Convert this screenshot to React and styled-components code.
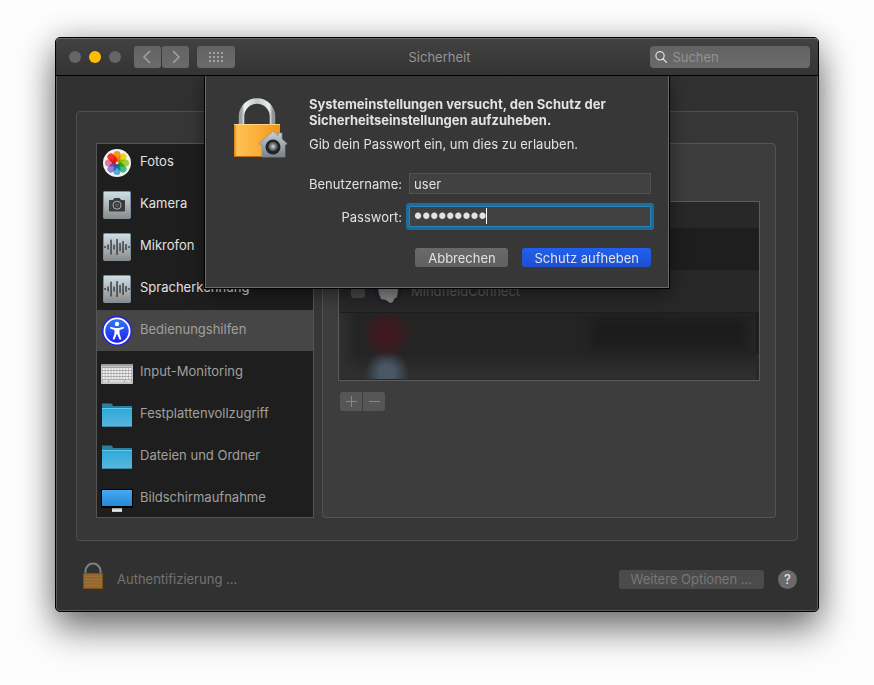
import { useState } from "react";
import styled, { createGlobalStyle } from "styled-components";

const GlobalStyle = createGlobalStyle`
  * {
    box-sizing: border-box;
  }

  body {
    margin: 0;
    background: #fdfdfd;
    color: #e2e2e2;
    font-family: Inter, "Liberation Sans", sans-serif;
    font-size: 13px;
    line-height: 16px;
  }

  button, input {
    font: inherit;
    color: inherit;
    margin: 0;
    padding: 0;
    border: none;
    outline: none;
  }
`;

const categories = [
  { name: "Fotos", icon: "photos" },
  { name: "Kamera", icon: "camera" },
  { name: "Mikrofon", icon: "wave" },
  { name: "Spracherkennung", icon: "wave" },
  { name: "Bedienungshilfen", icon: "access", dimmed: true },
  { name: "Input-Monitoring", icon: "keyboard", dimmed: true },
  { name: "Festplattenvollzugriff", icon: "folder", dimmed: true },
  { name: "Dateien und Ordner", icon: "folder", dimmed: true },
  { name: "Bildschirmaufnahme", icon: "display", dimmed: true },
];

const App = () => {
  const [selected, setSelected] = useState("Bedienungshilfen");

  return (
    <>
      <GlobalStyle />
      <Desktop>
        <Window>
          <Toolbar>
            <ToolbarLeft>
              <Lights>
                <Light aria-label="Schließen" />
                <Light aria-label="Minimieren" color="#ffbd04" />
                <Light aria-label="Zoomen" />
              </Lights>
              <NavButtons>
                <ToolButton aria-label="Zurück">
                  <ChevronIcon d="M9 1 3 7l6 6" />
                </ToolButton>
                <ToolButton aria-label="Vorwärts">
                  <ChevronIcon d="M4 1l6 6-6 6" />
                </ToolButton>
              </NavButtons>
              <ToolButton $wide aria-label="Alle einblenden">
                <GridIcon />
              </ToolButton>
            </ToolbarLeft>
            <WindowTitle>Sicherheit</WindowTitle>
            <SearchBox>
              <SearchIcon />
              <input type="search" placeholder="Suchen" aria-label="Suchen" />
            </SearchBox>
          </Toolbar>

          <Content>
            <Group>
              <SideList>
                {categories.map((item) => (
                  <li key={item.name}>
                    <SideItem
                      $selected={item.name === selected}
                      $dimmed={item.dimmed}
                      onClick={() => setSelected(item.name)}
                    >
                      <CategoryIcon name={item.icon} />
                      <span>{item.name}</span>
                    </SideItem>
                  </li>
                ))}
              </SideList>
              <Panel>
                <AppList>
                  <AppRow $short />
                  <AppRow $dark />
                  <AppRow>
                    <AppCheck type="checkbox" id="mindfield" disabled />
                    <MindfieldIcon />
                    <label htmlFor="mindfield">MindfieldConnect</label>
                  </AppRow>
                  <AppRow $dark />
                  <AppRow $short />
                  <Redacted />
                </AppList>
                <AddRemove>
                  <SmallButton aria-label="Hinzufügen">
                    <SignIcon d="M0 5.5h11M5.5 0v11" />
                  </SmallButton>
                  <SmallButton aria-label="Entfernen">
                    <SignIcon d="M0 5.5h11" />
                  </SmallButton>
                </AddRemove>
              </Panel>
            </Group>
            <Sheet />
          </Content>

          <Footer>
            <SmallLockIcon />
            <FooterText>Authentifizierung ...</FooterText>
            <MoreButton disabled>Weitere Optionen ...</MoreButton>
            <HelpButton aria-label="Hilfe">?</HelpButton>
          </Footer>
        </Window>
      </Desktop>
    </>
  );
};

const Sheet = () => {
  const [user, setUser] = useState("user");
  const [password, setPassword] = useState("password1");

  return (
    <SheetStyle onSubmit={(e) => e.preventDefault()}>
      <LockIcon />
      <SheetBody>
        <h1>
          Systemeinstellungen versucht, den Schutz der
          <br />
          Sicherheitseinstellungen aufzuheben.
        </h1>
        <p>Gib dein Passwort ein, um dies zu erlauben.</p>
        <Fields>
          <label htmlFor="user">Benutzername:</label>
          <Field>
            <input id="user" value={user} onChange={(e) => setUser(e.target.value)} />
          </Field>
          <label htmlFor="password">Passwort:</label>
          <Field $active>
            <input
              id="password"
              type="password"
              value={password}
              onChange={(e) => setPassword(e.target.value)}
            />
            <Caret />
          </Field>
        </Fields>
        <SheetButtons>
          <PushButton type="button">Abbrechen</PushButton>
          <PushButton $primary>Schutz aufheben</PushButton>
        </SheetButtons>
      </SheetBody>
    </SheetStyle>
  );
};

/* icons */

const ChevronIcon = ({ d }) => (
  <svg width="13" height="14" viewBox="0 0 13 14" fill="none" stroke="#a2a2a2" strokeWidth="1.5">
    <path d={d} />
  </svg>
);

const GridIcon = () => (
  <svg width="14" height="10" viewBox="0 0 14 10" fill="#a2a2a2">
    {[0, 4, 8].map((y) =>
      [0, 4, 8, 12].map((x) => <rect key={`${x}-${y}`} x={x} y={y} width="2" height="2" />)
    )}
  </svg>
);

const SearchIcon = () => (
  <svg width="14" height="14" viewBox="0 0 14 14" fill="none" stroke="#dedede" strokeWidth="1.4">
    <circle cx="5.7" cy="5.7" r="4.7" />
    <path d="M9 9l4 4" strokeLinecap="round" />
  </svg>
);

const SignIcon = ({ d }) => (
  <svg width="11" height="11" viewBox="0 0 11 11" stroke="#888888">
    <path d={d} />
  </svg>
);

const petals = ["#ffa21f", "#f7e01a", "#a8dc3c", "#48c78c", "#5ab4f0", "#9a8be0", "#f07cb4", "#ff3a2a"];
const bars = [2, 5, 15, 5, 16, 8, 12, 6, 2];

const CategoryIcon = ({ name }) => (
  <svg width="32" height="32" viewBox="0 0 32 32" aria-hidden="true">
    <defs>
      <linearGradient id="steel" x2="0" y2="1">
        <stop stopColor="#cfe0e8" />
        <stop offset="1" stopColor="#8b8b89" />
      </linearGradient>
      <linearGradient id="access" x2="0" y2="1">
        <stop stopColor="#2f7cf2" />
        <stop offset="1" stopColor="#1c1cf0" />
      </linearGradient>
      <linearGradient id="folder" x2="0" y2="1">
        <stop stopColor="#2aa9dc" />
        <stop offset="1" stopColor="#5cb6dc" />
      </linearGradient>
      <linearGradient id="display" x2="0" y2="1">
        <stop stopColor="#47aaf3" />
        <stop offset="1" stopColor="#2487d8" />
      </linearGradient>
    </defs>
    {name === "photos" && (
      <g style={{ isolation: "isolate" }}>
        <circle cx="16" cy="16" r="14" fill="#f1f1ef" />
        {petals.map((color, i) => (
          <rect
            key={color}
            x="12.500"
            y="4"
            width="7"
            height="11"
            rx="3.500"
            fill={color}
            style={{ mixBlendMode: "multiply" }}
            transform={`rotate(${i * 45} 16 16)`}
          />
        ))}
      </g>
    )}
    {(name === "camera" || name === "wave") && (
      <rect x="2.500" y="2.500" width="27" height="27" rx="1" fill="url(#steel)" stroke="#7d8f9b" />
    )}
    {name === "camera" && (
      <>
        <path d="M8.500 11.500h3.500l1.500-2h5l1.500 2h3.500v10.500h-15z" fill="#3a3b3c" stroke="#3a3b3c" strokeLinejoin="round" />
        <circle cx="16" cy="16.200" r="4" fill="#333" stroke="#a9b0b3" />
        <circle cx="16" cy="16.200" r="2.200" fill="#505355" />
      </>
    )}
    {name === "wave" &&
      bars.map((h, i) => (
        <rect key={i} x={3.300 + i * 3} y={16 - h / 2} width="1.500" height={h} rx="0.500" fill="#3c4043" />
      ))}
    {name === "access" && (
      <>
        <circle cx="16" cy="16" r="15" fill="#2222e6" />
        <circle cx="16" cy="16" r="12.600" fill="url(#access)" stroke="#fff" strokeWidth="1.800" />
        <circle cx="16" cy="9" r="2.200" fill="#fff" />
        <path
          d="M9.200 11.800l5 1.200h3.600l5-1.200v1.800l-4.300 1.400v3.500l1.900 6h-1.900l-2.300-5.500h-.4l-2.300 5.500h-1.900l1.900-6v-3.500l-4.300-1.400z"
          fill="#fff"
        />
      </>
    )}
    {name === "keyboard" && (
      <>
        <rect y="7" width="32" height="20" rx="1" fill="#c6c6c6" />
        <rect y="7" width="32" height="2" fill="#9f9b9b" />
        <rect x="1" y="10" width="30" height="15" fill="#a1a1a1" />
        {[0, 1, 2, 3].map((row) =>
          [0, 1, 2, 3, 4, 5, 6, 7, 8, 9].map((col) => (
            <rect key={`${row}-${col}`} x={1.500 + col * 2.950} y={11 + row * 3} width="2.300" height="2.200" fill="#f0f0f0" />
          ))
        )}
        <path d="M2 24h5M8 24h15M24 24h6" stroke="#f0f0f0" strokeWidth="1.600" />
      </>
    )}
    {name === "folder" && (
      <>
        <path d="M1 4.500h9q1.500 0 2 2.500h19v4H1z" fill="#2d7f9f" />
        <rect x="1" y="9" width="30" height="19" fill="url(#folder)" />
        <path d="M1 9.500h30" stroke="#63c8ea" />
        <path d="M1 27.500h30" stroke="#3d86a4" />
      </>
    )}
    {name === "display" && (
      <>
        <rect x="0" y="6" width="32" height="19" rx="1" fill="#000" />
        <rect x="1" y="7" width="30" height="16" fill="url(#display)" />
        <path d="M11 25h10v4H11z" fill="#a8a8a8" />
        <path d="M11 27.500h10" stroke="#ececec" strokeWidth="2" />
      </>
    )}
  </svg>
);

const MindfieldIcon = () => (
  <svg width="30" height="30" viewBox="0 0 30 30" aria-hidden="true">
    <circle cx="15" cy="15" r="14" fill="#232329" stroke="#24243c" />
    <path d="M4 5h22v6l-1 3-1 7-3 2-1 3-3 1-4-3-5-1-2-5z" fill="#858585" />
  </svg>
);

const LockIcon = () => (
  <svg width="54" height="62" viewBox="0 -2 54 62" aria-hidden="true">
    <defs>
      <linearGradient id="lockBody" x2="1" y2="0">
        <stop stopColor="#d97a12" />
        <stop offset="0.06" stopColor="#ffc055" />
        <stop offset="0.5" stopColor="#fbb03a" />
        <stop offset="1" stopColor="#f29414" />
      </linearGradient>
      <linearGradient id="shackle" x2="1" y2="0">
        <stop stopColor="#97a2a5" />
        <stop offset="0.1" stopColor="#eef2f2" />
        <stop offset="0.5" stopColor="#c0c9cb" />
        <stop offset="0.9" stopColor="#e8ecec" />
        <stop offset="1" stopColor="#8f999c" />
      </linearGradient>
      <linearGradient id="house" x2="0" y2="1">
        <stop stopColor="#cbd2d5" />
        <stop offset="1" stopColor="#77838a" />
      </linearGradient>
      <radialGradient id="knob">
        <stop stopColor="#d5dadb" />
        <stop offset="1" stopColor="#30363a" />
      </radialGradient>
    </defs>
    <path d="M7.500 28V18.500a15.500 15.500 0 0 1 31 0V28" fill="none" stroke="url(#shackle)" strokeWidth="5.500" />
    <rect y="26" width="46" height="33" rx="1" fill="url(#lockBody)" />
    <path d="M0 26.500h46" stroke="#ffd47e" />
    <path d="M0 58.500h46" stroke="#c26a0b" />
    <path
      d="M25 45.500L39 33l5 4.500V35h4v6l5 4.500-2 2V59H28V47.500z"
      fill="url(#house)"
      stroke="#828c91"
      strokeWidth="0.700"
    />
    <circle cx="39" cy="49" r="7.500" fill="#1f2326" />
    <circle cx="39" cy="48.500" r="5" fill="url(#knob)" />
  </svg>
);

const SmallLockIcon = () => (
  <svg width="22" height="34" viewBox="0 0 22 34" aria-hidden="true">
    <path d="M3.500 12V9a7.500 7.500 0 0 1 15 0v3" fill="none" stroke="#7c8284" strokeWidth="2" />
    <rect x="1.500" y="11.500" width="19" height="15" fill="#92682f" stroke="#7c5018" />
    <path d="M2 14.500h18M2 17.500h18M2 20.500h18M2 23.500h18" stroke="#9c7138" />
  </svg>
);

/* window */

const Desktop = styled.main`
  padding: 37px 55px 73px;
`;

const Window = styled.div`
  position: relative;
  min-width: 600px;
  background: #313131;
  border: 1px solid #000;
  border-radius: 5px;
  box-shadow: inset 0 0 0 1px #5a5a5a, 0 18px 36px rgba(0, 0, 0, 0.5),
    0 0 30px rgba(0, 0, 0, 0.2);
`;

const Toolbar = styled.header`
  display: grid;
  grid-template-columns: 1fr auto 1fr;
  align-items: center;
  height: 38px;
  padding: 0 8px 0 13px;
  background: linear-gradient(#424242, #343434);
  border-bottom: 1px solid #000;
  border-radius: 4px 4px 0 0;
  box-shadow: inset 0 1px 0 #6a6a6a;
`;

const ToolbarLeft = styled.div`
  display: flex;
  align-items: center;
`;

const Lights = styled.div`
  display: flex;
  gap: 8px;
`;

const Light = styled.button`
  width: 12px;
  height: 12px;
  border-radius: 50%;
  background: ${(props) => props.color || "#656565"};
`;

const NavButtons = styled.div`
  display: flex;
  gap: 1px;
  margin: 0 8px 0 13px;
`;

const ToolButton = styled.button`
  display: flex;
  align-items: center;
  justify-content: center;
  width: ${(props) => (props.$wide ? 38 : 27)}px;
  height: 22px;
  border-radius: 3px;
  background: linear-gradient(#646464, #6a6a6a);
`;

const WindowTitle = styled.div`
  color: #959595;
`;

const SearchBox = styled.div`
  justify-self: end;
  display: flex;
  align-items: center;
  gap: 5px;
  width: 160px;
  height: 22px;
  padding: 0 5px;
  border-radius: 4px;
  background: linear-gradient(#636363, #6a6a6a);

  input {
    width: 100%;
    background: none;
  }

  input::placeholder {
    color: #939393;
  }
`;

const Content = styled.div`
  position: relative;
  padding: 35px 20px 0;
`;

const Group = styled.div`
  display: flex;
  gap: 8px;
  padding: 31px 21px 22px 19px;
  background: #373737;
  border: 1px solid #4f4f4f;
  border-radius: 4px;
`;

const SideList = styled.ul`
  width: 218px;
  height: 375px;
  margin: 0;
  padding: 0;
  list-style: none;
  overflow-y: auto;
  scrollbar-width: none;
  background: #1e1e1e;
  border: 1px solid #555555;

  li:first-child {
    margin-top: -2px;
  }
`;

const SideItem = styled.button`
  display: flex;
  align-items: center;
  gap: 7px;
  width: 100%;
  height: 42px;
  padding: 0 4px;
  text-align: left;
  color: ${(props) => (props.$dimmed ? "#a0a09e" : "#e2e2e2")};
  background: ${(props) => (props.$selected ? "#464646" : "none")};
  border-bottom: 1px solid #1e1e1e;

  span {
    padding-bottom: 4px;
  }
`;

const Panel = styled.section`
  flex: 1;
  padding: 57px 15px 0;
  background: #3d3d3d;
  border: 1px solid #555555;
  border-radius: 4px;
`;

const AppList = styled.div`
  position: relative;
  border: 1px solid #5c5c5c;
`;

const AppRow = styled.div`
  display: flex;
  align-items: center;
  height: ${(props) => (props.$short ? 26 : 42)}px;
  padding: 0 12px;
  background: ${(props) => (props.$dark ? "#1e1e1e" : "#282828")};
  color: #5e5e5e;

  svg {
    margin: 0 8px;
  }
`;

const AppCheck = styled.input`
  appearance: none;
  width: 14px;
  height: 14px;
  border-radius: 3px;
  background: #484848;
`;

// two entries are blurred out
const Redacted = styled.div`
  position: absolute;
  inset: auto 3px 1px 0;
  height: 66px;
  overflow: hidden;
  background: radial-gradient(circle at 48px 21px, #3e191f 10px, transparent 25px),
    radial-gradient(circle at 48px 60px, #485665 8px, transparent 22px),
    linear-gradient(to right, #303030, transparent 18px),
    linear-gradient(#242424 60%, #303030);

  &::after {
    content: "";
    position: absolute;
    top: 5px;
    right: 10px;
    width: 155px;
    height: 30px;
    background: #1c1c1c;
    filter: blur(5px);
  }
`;

const AddRemove = styled.div`
  display: flex;
  gap: 1px;
  margin: 11px 2px;
`;

const SmallButton = styled.button`
  display: flex;
  align-items: center;
  justify-content: center;
  width: 22px;
  height: 19px;
  background: #565656;

  &:first-child {
    border-radius: 3px 0 0 3px;
  }

  &:last-child {
    border-radius: 0 3px 3px 0;
  }
`;

const Footer = styled.footer`
  display: flex;
  align-items: center;
  padding: 21px 21px 15px 26px;
`;

const FooterText = styled.div`
  flex: 1;
  margin-left: 13px;
  color: #737373;
`;

const MoreButton = styled.button`
  height: 19px;
  padding: 0 12px;
  border-radius: 3px;
  background: #4b4b4b;
  color: #777777;
`;

const HelpButton = styled.button`
  width: 19px;
  height: 19px;
  margin-left: 14px;
  border-radius: 50%;
  background: #6b6b6b;
  font-weight: 500;
`;

/* password sheet */

const SheetStyle = styled.form`
  position: absolute;
  top: 0;
  left: 0;
  right: 0;
  display: flex;
  align-items: flex-start;
  gap: 21px;
  width: 464px;
  margin: 0 auto;
  padding: 20px 17px 20px 28px;
  background: #373737;
  border: 1px solid #6a6a6a;
  border-top: none;
  box-shadow: 0 0 0 1px #000, 0 5px 18px rgba(0, 0, 0, 0.5);
  clip-path: inset(0 -40px -40px);
`;

const SheetBody = styled.div`
  flex: 1;

  h1 {
    margin: 0 0 8px;
    font-size: 13px;
    font-weight: 700;
  }

  p {
    margin: 0 0 21px;
  }
`;

const Fields = styled.div`
  display: grid;
  grid-template-columns: auto 1fr;
  align-items: center;
  gap: 12px 7px;

  label {
    text-align: right;
  }
`;

const Field = styled.div`
  position: relative;

  input {
    display: block;
    width: 100%;
    height: 21px;
    padding: 0 4px;
    background: #414141;
    border: 1px solid ${(props) => (props.$active ? "#2b83b3" : "#515151")};
    box-shadow: ${(props) => (props.$active ? "0 0 0 3px #1c6c9c" : "none")};
    border-radius: ${(props) => (props.$active ? 1 : 0)}px;
  }

  input[type="password"] {
    font-family: "Liberation Sans", sans-serif;
    font-size: 23px;
  }
`;

const Caret = styled.span`
  position: absolute;
  top: 2px;
  left: 77px;
  width: 1px;
  height: 16px;
  background: #fff;
`;

const SheetButtons = styled.div`
  display: flex;
  justify-content: flex-end;
  gap: 14px;
  margin-top: 21px;
`;

const PushButton = styled.button`
  min-width: 93px;
  height: 19px;
  padding: 0 12px;
  border-radius: 3px;
  background: ${(props) =>
    props.$primary ? "linear-gradient(#2160ee, #1d4fd0)" : "linear-gradient(#6a6a6a, #606060)"};
`;

export default App;
